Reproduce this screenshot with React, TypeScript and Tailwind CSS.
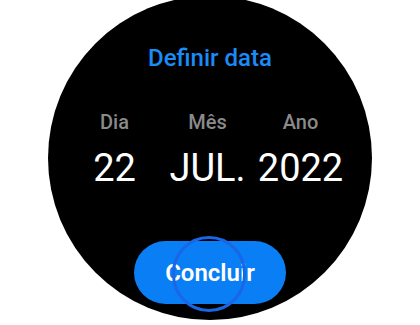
export default function App() {
  return (
    <div className="w-[420px] h-[325px] bg-white overflow-hidden relative" style={{ fontFamily: 'Roboto, "Noto Sans", sans-serif' }}>
      <div className="w-[324px] h-[324px] rounded-full bg-black mx-auto mt-[-4px] flex flex-col items-center pt-[48px]">
        <div className="text-[24px] leading-[28px] font-medium text-[#1a8cf7]">Definir data</div>
        <div className="mt-[38px] flex mr-[5px]">
          {[
            ["Dia", "22"],
            ["Mês", "JUL."],
            ["Ano", "2022"],
          ].map(([l, v]) => (
            <div key={l} className="w-[93px] flex flex-col items-center">
              <div className="text-[20px] leading-[24px] font-medium text-[#8a8a8a]">{l}</div>
              <div className="mt-[11px] text-[38px] leading-[46px] text-white">{v}</div>
            </div>
          ))}
        </div>
        <div className="mt-[50px] relative">
          <div className="w-[152px] h-[63px] rounded-full bg-[#0a7ef5] flex items-center justify-center text-white text-[24px] font-semibold">
            Concluir
          </div>
          <div className="absolute left-[38px] top-[-5px] w-[74px] h-[76px] rounded-full border-[3px] border-[#1a66e6]" />
        </div>
      </div>
    </div>
  );
}
